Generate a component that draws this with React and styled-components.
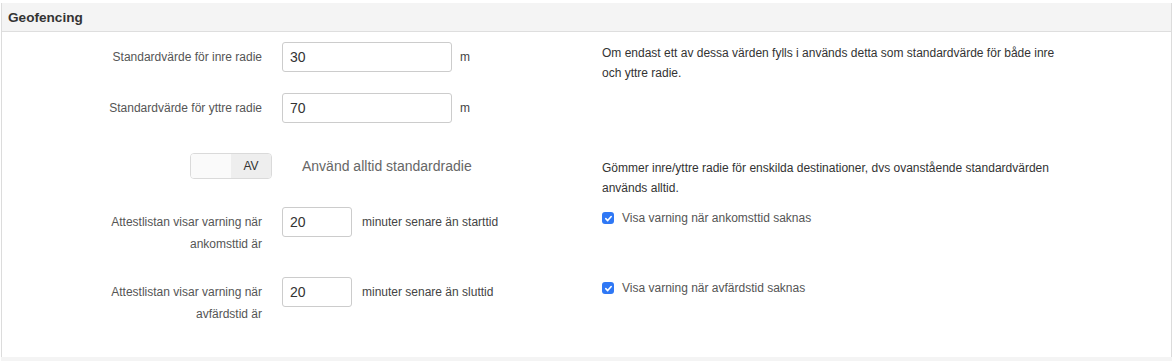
import styled, { createGlobalStyle } from "styled-components";

const GlobalStyle = createGlobalStyle`
  html, body {
    margin: 0;
    padding: 0;
    background: #fff;
  }
  body {
    font-family: "Liberation Sans", Arial, Helvetica, sans-serif;
    color: #333;
  }
`;

const Page = styled.div`
  padding: 3px 1px 0 1px;
`;

const Panel = styled.section`
  border: 1px solid #dcdcdc;
  border-top: none;
  border-bottom: none;
  background: #fff;
`;

const PanelHeader = styled.div`
  height: 28px;
  background: #f4f4f4;
  border-bottom: 1px solid #dedede;
  display: flex;
  align-items: center;
  padding-left: 6px;
  font-size: 13.6px;
  font-weight: 700;
  color: #333;
`;

const PanelBody = styled.div`
  padding: 10px 0 32px;
`;

const NextPanel = styled.div`
  height: 8px;
  background: #f4f4f4;
`;

const Row = styled.div`
  display: flex;
  align-items: flex-start;
  margin-top: ${(p) => p.$mt || 0}px;
`;

const LabelCell = styled.div`
  flex: none;
  width: ${(p) => (p.$toggle ? 270 : 260)}px;
  margin-right: ${(p) => (p.$toggle ? 10 : 20)}px;
  display: flex;
  justify-content: flex-end;
`;

const Label = styled.label`
  max-width: 162px;
  text-align: right;
  font-size: 12px;
  line-height: 22px;
  padding-top: 4px;
  color: #555;
`;

const Control = styled.div`
  flex: none;
  width: 320px;
  display: flex;
  align-items: center;
  min-height: ${(p) => (p.$toggle ? 26 : 30)}px;
`;

const Input = styled.input`
  box-sizing: border-box;
  width: ${(p) => (p.$short ? 70 : 170)}px;
  height: 30px;
  padding: 0 7px;
  border: 1px solid #ccc;
  border-radius: 3px;
  font-family: inherit;
  font-size: 14px;
  color: #333;
  background: #fff;
  outline: none;
`;

const Unit = styled.span`
  margin-left: ${(p) => (p.$wide ? 10 : 8)}px;
  font-size: 12px;
  color: #444;
`;

const Toggle = styled.div`
  box-sizing: border-box;
  width: 82px;
  height: 26px;
  border: 1px solid #dadada;
  border-radius: 4px;
  overflow: hidden;
  display: flex;
`;

const ToggleHalf = styled.span`
  flex: 1;
  display: flex;
  align-items: center;
  justify-content: center;
  font-size: 12px;
  color: #333;
  background: ${(p) => (p.$off ? "#eeeeee" : "#fafafa")};
`;

const ToggleText = styled.span`
  padding-left: 20px;
  font-size: 14px;
  color: #666;
`;

const Help = styled.div`
  flex: none;
  width: 462px;
  font-size: 12px;
  line-height: 20px;
  color: #333;
  padding-top: ${(p) => p.$pt || 1}px;
`;

const CheckRow = styled.label`
  display: flex;
  align-items: center;
  font-size: 12px;
  color: #555;
  line-height: 20px;
`;

const CheckBox = styled.span`
  width: 12px;
  height: 12px;
  border-radius: 3px;
  background: #2f78f5;
  display: inline-flex;
  align-items: center;
  justify-content: center;
  margin-right: 8px;
`;

const Check = () => (
  <CheckBox>
    <svg width="9" height="9" viewBox="0 0 10 10">
      <path
        d="M2 5.2 L4.1 7.3 L8 2.8"
        fill="none"
        stroke="#fff"
        strokeWidth="1.8"
        strokeLinecap="round"
        strokeLinejoin="round"
      />
    </svg>
  </CheckBox>
);

export default function App() {
  return (
    <Page>
      <GlobalStyle />
      <Panel>
        <PanelHeader>Geofencing</PanelHeader>
        <PanelBody>
          <Row>
            <LabelCell>
              <Label>Standardvärde för inre radie</Label>
            </LabelCell>
            <Control>
              <Input defaultValue="30" />
              <Unit>m</Unit>
            </Control>
            <Help>
              Om endast ett av dessa värden fylls i används detta som
              standardvärde för både inre och yttre radie.
            </Help>
          </Row>
          <Row $mt={10}>
            <LabelCell>
              <Label>Standardvärde för yttre radie</Label>
            </LabelCell>
            <Control>
              <Input defaultValue="70" />
              <Unit>m</Unit>
            </Control>
          </Row>
          <Row $mt={30}>
            <LabelCell $toggle>
              <Toggle>
                <ToggleHalf />
                <ToggleHalf $off>AV</ToggleHalf>
              </Toggle>
            </LabelCell>
            <Control $toggle>
              <ToggleText>Använd alltid standardradie</ToggleText>
            </Control>
            <Help $pt={5}>
              Gömmer inre/yttre radie för enskilda destinationer, dvs
              ovanstående standardvärden används alltid.
            </Help>
          </Row>
          <Row $mt={9}>
            <LabelCell>
              <Label>Attestlistan visar varning när ankomsttid är</Label>
            </LabelCell>
            <Control>
              <Input $short defaultValue="20" />
              <Unit $wide>minuter senare än starttid</Unit>
            </Control>
            <Help>
              <CheckRow>
                <Check />
                Visa varning när ankomsttid saknas
              </CheckRow>
            </Help>
          </Row>
          <Row $mt={22}>
            <LabelCell>
              <Label>Attestlistan visar varning när avfärdstid är</Label>
            </LabelCell>
            <Control>
              <Input $short defaultValue="20" />
              <Unit $wide>minuter senare än sluttid</Unit>
            </Control>
            <Help>
              <CheckRow>
                <Check />
                Visa varning när avfärdstid saknas
              </CheckRow>
            </Help>
          </Row>
        </PanelBody>
      </Panel>
      <NextPanel />
    </Page>
  );
}
